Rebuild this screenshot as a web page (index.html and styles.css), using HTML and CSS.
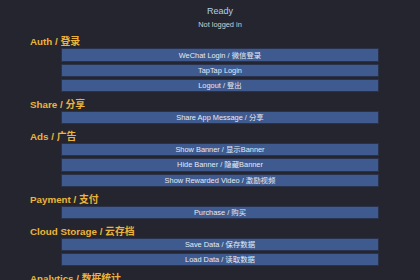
FILE: index.html
```html
<!DOCTYPE html>
<html lang="zh-CN">
<head>
<meta charset="UTF-8">
<meta name="viewport" content="width=device-width, initial-scale=1.0">
<title>SDK Demo</title>
<link rel="stylesheet" href="styles.css">
</head>
<body>
<div class="container">
<div class="status">
<div class="status-title">Ready</div>
<div class="status-user">Not logged in</div>
</div>

<div class="section">
<h2>Auth / 登录</h2>
<button>WeChat Login / 微信登录</button>
<button>TapTap Login</button>
<button>Logout / 登出</button>
</div>

<div class="section">
<h2>Share / 分享</h2>
<button>Share App Message / 分享</button>
</div>

<div class="section">
<h2>Ads / 广告</h2>
<button>Show Banner / 显示Banner</button>
<button>Hide Banner / 隐藏Banner</button>
<button>Show Rewarded Video / 激励视频</button>
</div>

<div class="section">
<h2>Payment / 支付</h2>
<button>Purchase / 购买</button>
</div>

<div class="section">
<h2>Cloud Storage / 云存档</h2>
<button>Save Data / 保存数据</button>
<button>Load Data / 读取数据</button>
</div>

<div class="section">
<h2>Analytics / 数据统计</h2>
</div>
</div>
</body>
</html>
```

FILE: styles.css
```css
html, body {
margin: 0;
background-color: #25252f;
overflow: hidden;
}
body {
font-family: "Liberation Sans", Arial, "Noto Sans CJK SC", sans-serif;
}
.container {
padding: 4.5px 10px 0 30px;
}
.status {
text-align: center;
margin-bottom: 2.3px;
}
.status-title {
font-size: 9px;
line-height: 12px;
color: #a9d2f0;
}
.status-user {
font-size: 7.4px;
line-height: 10px;
margin-top: 3px;
color: #cfcfd2;
}
.section {
margin-top: 5.9px;
}
.section h2 {
margin: 0;
font-size: 9.8px;
line-height: 13px;
font-weight: bold;
color: #ebb53b;
}
.section button {
display: block;
box-sizing: border-box;
width: calc(100% - 62px);
height: 13.3px;
margin: 1.9px 31px 0 31px;
padding: 0;
border: 1px solid #28324c;
background-color: #3e5a8f;
color: #e6eaf2;
font-family: inherit;
font-size: 7.4px;
line-height: 11px;
text-align: center;
}
.section h2 + button {
margin-top: 0;
}
```
